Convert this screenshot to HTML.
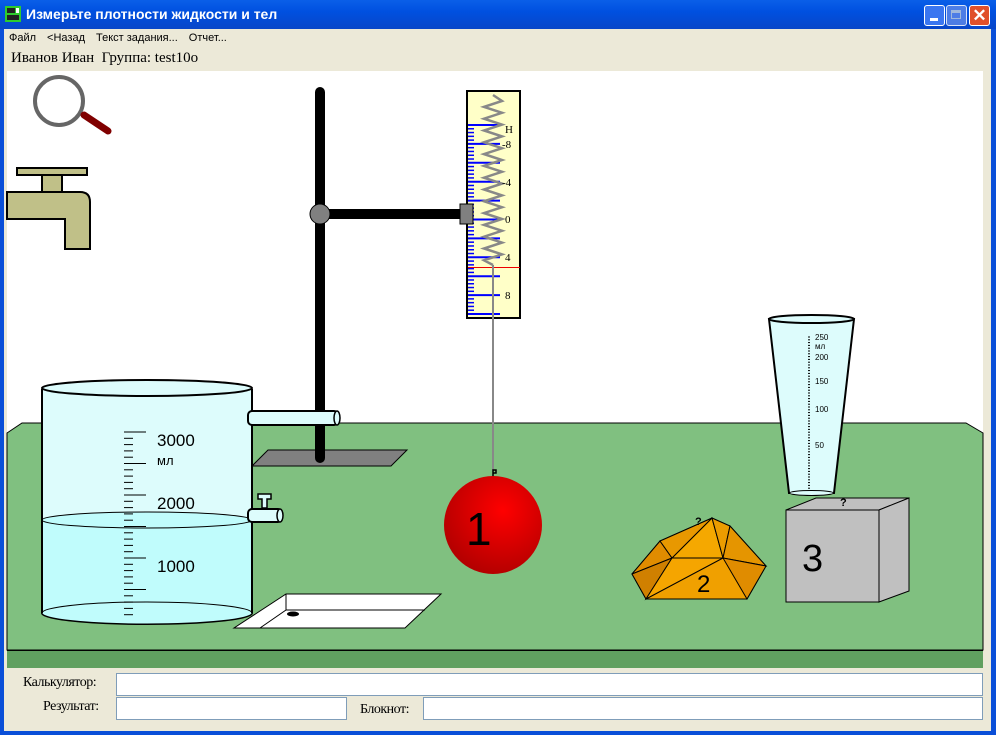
<!DOCTYPE html>
<html><head><meta charset="utf-8">
<style>
html,body{margin:0;padding:0;width:996px;height:735px;overflow:hidden;background:#ece9d8;font-family:"Liberation Sans",sans-serif}
#title{position:absolute;left:0;top:0;width:996px;height:29px;background:linear-gradient(#0a5fe8,#0050e0 40%,#0846c8);}
#title span{position:absolute;left:26px;top:6px;color:#fff;font:bold 14px "Liberation Sans",sans-serif;}
.lb{position:absolute;left:0;top:29px;width:4px;height:706px;background:#0a4fd8}
.rb{position:absolute;right:0;top:29px;width:5px;height:706px;background:#0a4fd8}
.bb{position:absolute;left:0;top:731px;width:996px;height:4px;background:#0a4fd8}
#menu{position:absolute;left:9px;top:32px;font:11px "Liberation Sans",sans-serif;color:#000}
#menu span{margin-right:11px}
#user{position:absolute;left:11px;top:50px;font:15px "Liberation Serif",serif}
.btn{position:absolute;top:5px;width:21px;height:21px;border:1px solid #fff;border-radius:3px;box-sizing:border-box}
input{position:absolute;border:1px solid #7f9db9;background:#fff;box-sizing:border-box;height:23px;margin:0;padding:0}
.lab{position:absolute;font:14px "Liberation Serif",serif;letter-spacing:-0.5px}
</style></head><body>
<div id="title"><svg style="position:absolute;left:5px;top:6px" width="16" height="16"><rect x="0" y="0" width="16" height="16" fill="#2ecc2e"/><rect x="2" y="2" width="8" height="5" fill="#222"/><rect x="2" y="9" width="12" height="5" fill="#222"/><rect x="11" y="2" width="3" height="5" fill="#fff"/></svg><span>Измерьте плотности жидкости и тел</span>
<div class="btn" style="left:924px;background:#3a76f0"><div style="position:absolute;left:5px;top:12px;width:8px;height:3px;background:#fff"></div></div>
<div class="btn" style="left:946px;background:#5a86e8;opacity:.85"><div style="position:absolute;left:4px;top:4px;width:10px;height:9px;border:1px solid #bcd;border-top-width:3px;box-sizing:border-box"></div></div>
<div class="btn" style="left:969px;background:#e0502a;color:#fff;font:bold 17px 'Liberation Sans';text-align:center;line-height:19px">✕</div>
</div>
<div class="lb"></div><div class="rb"></div><div class="bb"></div>
<div id="menu"><span>Файл</span><span>&lt;Назад</span><span>Текст задания...</span><span>Отчет...</span></div>
<div id="user">Иванов Иван&nbsp; Группа: test10o</div>
<svg style="position:absolute;left:0;top:0" width="996" height="735" id="sv">
<rect x="7" y="71" width="976" height="597" fill="#fff"/>
<polygon points="7,433 22,423 966,423 983,433 983,650 7,650" fill="#80c080" stroke="#000" stroke-width="1"/>
<rect x="7" y="650" width="976" height="18" fill="#60a060"/>
<line x1="7" y1="650.5" x2="983" y2="650.5" stroke="#000"/>
<circle cx="59" cy="101" r="24" fill="none" stroke="#666" stroke-width="4"/>
<line x1="84" y1="115" x2="108" y2="131" stroke="#800000" stroke-width="7" stroke-linecap="round"/>
<path d="M7,192 H80 Q90,192 90,202 V249 H65 V219 H7 Z" fill="#c0c088" stroke="#000" stroke-width="2"/>
<rect x="42" y="175" width="20" height="17" fill="#c0c088" stroke="#000" stroke-width="2"/>
<rect x="17" y="168" width="70" height="7" fill="#c0c088" stroke="#000" stroke-width="2"/>
<polygon points="268,450 407,450 391,466 252,466" fill="#808080" stroke="#000"/>
<line x1="320" y1="92" x2="320" y2="458" stroke="#000" stroke-width="10" stroke-linecap="round"/>
<line x1="320" y1="214" x2="462" y2="214" stroke="#000" stroke-width="10"/>
<circle cx="320" cy="214" r="10" fill="#808080" stroke="#000"/>
<rect x="467" y="91" width="53" height="227" fill="#ffffc8" stroke="#000" stroke-width="2"/>
<g id="dyn"></g>
<line x1="468" y1="267.5" x2="520" y2="267.5" stroke="#e00" stroke-width="1"/>
<rect x="460" y="204" width="13" height="20" fill="#808080" stroke="#000"/>
<g font-family="Liberation Serif" font-size="11" fill="#000">
<text x="505" y="133">Н</text><text x="502" y="148">-8</text><text x="502" y="186">-4</text><text x="505" y="223">0</text><text x="505" y="261">4</text><text x="505" y="299">8</text></g>
<line x1="493" y1="265" x2="493" y2="470" stroke="#888" stroke-width="2"/>
<path d="M493,478 V470 h3 v3 h-3" fill="none" stroke="#000" stroke-width="1.5"/>
<defs><radialGradient id="rg" cx="0.6" cy="0.35" r="0.7"><stop offset="0" stop-color="#ff0000"/><stop offset="1" stop-color="#b00000"/></radialGradient></defs>
<circle cx="493" cy="525" r="49" fill="url(#rg)"/>
<text x="466" y="545" font-family="Liberation Sans" font-size="46" fill="#000">1</text>
<path d="M42,389 V613 A105,11 0 0 0 252,613 V389" fill="#ddfcfc" stroke="#000" stroke-width="2"/>
<path d="M42,520 V613 A105,11 0 0 0 252,613 V520 A105,8 0 0 1 42,520 Z" fill="#c0fcfc"/>
<ellipse cx="147" cy="520" rx="105" ry="8" fill="#c0fcfc" stroke="#000" stroke-width="1"/>
<ellipse cx="147" cy="613" rx="105" ry="11" fill="#c0fcfc" stroke="#000" stroke-width="1"/>
<path d="M42,389 V613 M252,389 V613" stroke="#000" stroke-width="2"/>
<ellipse cx="147" cy="388" rx="105" ry="8" fill="#ddfcfc" stroke="#000" stroke-width="2"/>
<g id="bk"></g>
<g font-family="Liberation Sans" font-size="17" fill="#000"><text x="157" y="446">3000</text><text x="157" y="509">2000</text><text x="157" y="572">1000</text><text x="157" y="465" font-size="13">мл</text></g>
<rect x="248" y="411" width="90" height="14" rx="4" fill="#ddfcfc" stroke="#000" stroke-width="2"/>
<ellipse cx="337" cy="418" rx="3" ry="7" fill="#ddfcfc" stroke="#000" stroke-width="1.5"/>
<rect x="248" y="509" width="34" height="13" rx="4" fill="#ddfcfc" stroke="#000" stroke-width="2"/>
<ellipse cx="280" cy="515.5" rx="3" ry="6.5" fill="#ddfcfc" stroke="#000" stroke-width="1.5"/>
<path d="M258,494 h13 v5 h-4 v9 h-5 v-9 h-4 z" fill="#ddfcfc" stroke="#000" stroke-width="1.5"/>
<polygon points="286,594 441,594 405,628 234,628" fill="#fff" stroke="#000"/>
<polyline points="286,594 286,610 260,628" fill="none" stroke="#000"/>
<line x1="286" y1="610" x2="425" y2="610" stroke="#000"/>
<ellipse cx="293" cy="614" rx="6" ry="2.5" fill="#000"/>
<path d="M769,319 L789,493 L834,493 L854,319 Z" fill="#ddfcfc" stroke="#000" stroke-width="2"/>
<ellipse cx="811.5" cy="319" rx="42.5" ry="4" fill="#ddfcfc" stroke="#000" stroke-width="2"/>
<ellipse cx="811.5" cy="493" rx="22" ry="2.5" fill="#ddfcfc" stroke="#000" stroke-width="1"/>
<g id="gl"></g>
<g font-family="Liberation Sans" font-size="8" fill="#000"><text x="815" y="340">250</text><text x="815" y="349">мл</text><text x="815" y="360">200</text><text x="815" y="384">150</text><text x="815" y="412">100</text><text x="815" y="448">50</text></g>
<polygon points="786,510 816,498 909,498 879,510" fill="#c0c0c0" stroke="#000"/>
<polygon points="879,510 909,498 909,591 879,602" fill="#c0c0c0" stroke="#000"/>
<rect x="786" y="510" width="93" height="92" fill="#c0c0c0" stroke="#000"/>
<text x="802" y="571" font-family="Liberation Sans" font-size="38" fill="#000">3</text>
<text x="840" y="506" font-family="Liberation Sans" font-size="11" font-weight="bold">?</text>
<g stroke="#000" stroke-width="1">
<polygon points="632,574 660,541 712,518 730,526 766,566 747,599 646,599" fill="#f0a000"/>
<polygon points="632,574 660,541 672,558" fill="#e08c00"/>
<polygon points="632,574 672,558 646,599" fill="#d08000"/>
<polygon points="712,518 723,558 672,558" fill="#f5a800"/>
<polygon points="660,541 712,518 672,558" fill="#e89800"/>
<polygon points="712,518 730,526 723,558" fill="#eb9c00"/>
<polygon points="730,526 766,566 723,558" fill="#e59500"/>
<polygon points="723,558 766,566 747,599" fill="#e08c00"/>
<polygon points="672,558 723,558 646,599" fill="#f5a500"/>
</g>
<text x="697" y="592" font-family="Liberation Sans" font-size="24" fill="#000">2</text>
<text x="695" y="525" font-family="Liberation Sans" font-size="11" font-weight="bold">?</text>
</svg>
<div class="lab" style="left:23px;top:675px">Калькулятор:</div>
<input style="left:116px;top:673px;width:867px">
<div class="lab" style="left:43px;top:699px">Результат:</div>
<input style="left:116px;top:697px;width:231px">
<div class="lab" style="left:360px;top:702px">Блокнот:</div>
<input style="left:423px;top:697px;width:560px">
<script>
var ns="http://www.w3.org/2000/svg";
function ln(g,x1,y1,x2,y2,c,w){var l=document.createElementNS(ns,"line");l.setAttribute("x1",x1);l.setAttribute("y1",y1);l.setAttribute("x2",x2);l.setAttribute("y2",y2);l.setAttribute("stroke",c);l.setAttribute("stroke-width",w);document.getElementById(g).appendChild(l);}
for(var i=0;i<=50;i++){var y=125+i*3.78;if(y>316)break;if(i%5==0)ln("dyn",468,y,500,y,"#00f",2);else ln("dyn",468,y,474,y,"#00f",1.5);}
var d="M493,95";var n=28;for(var k=0;k<n;k++){var y0=98+k*5.9;d+=" L"+(k%2?484:502)+","+(y0+3);}d+=" L493,265";
var p=document.createElementNS(ns,"path");p.setAttribute("d",d);p.setAttribute("fill","none");p.setAttribute("stroke","#888");p.setAttribute("stroke-width","2.5");document.getElementById("dyn").appendChild(p);
for(var j=0;j<=30;j++){var y=432+j*6.3;if(y>618)break;ln("bk",124,y,(j%5==0?146:133),y,"#000",1);}
for(var j=0;j<=54;j++){var y=337+j*2.8;if(y>489)break;ln("gl",808,y,810,y,"#000",1);}
</script>
</body></html>
